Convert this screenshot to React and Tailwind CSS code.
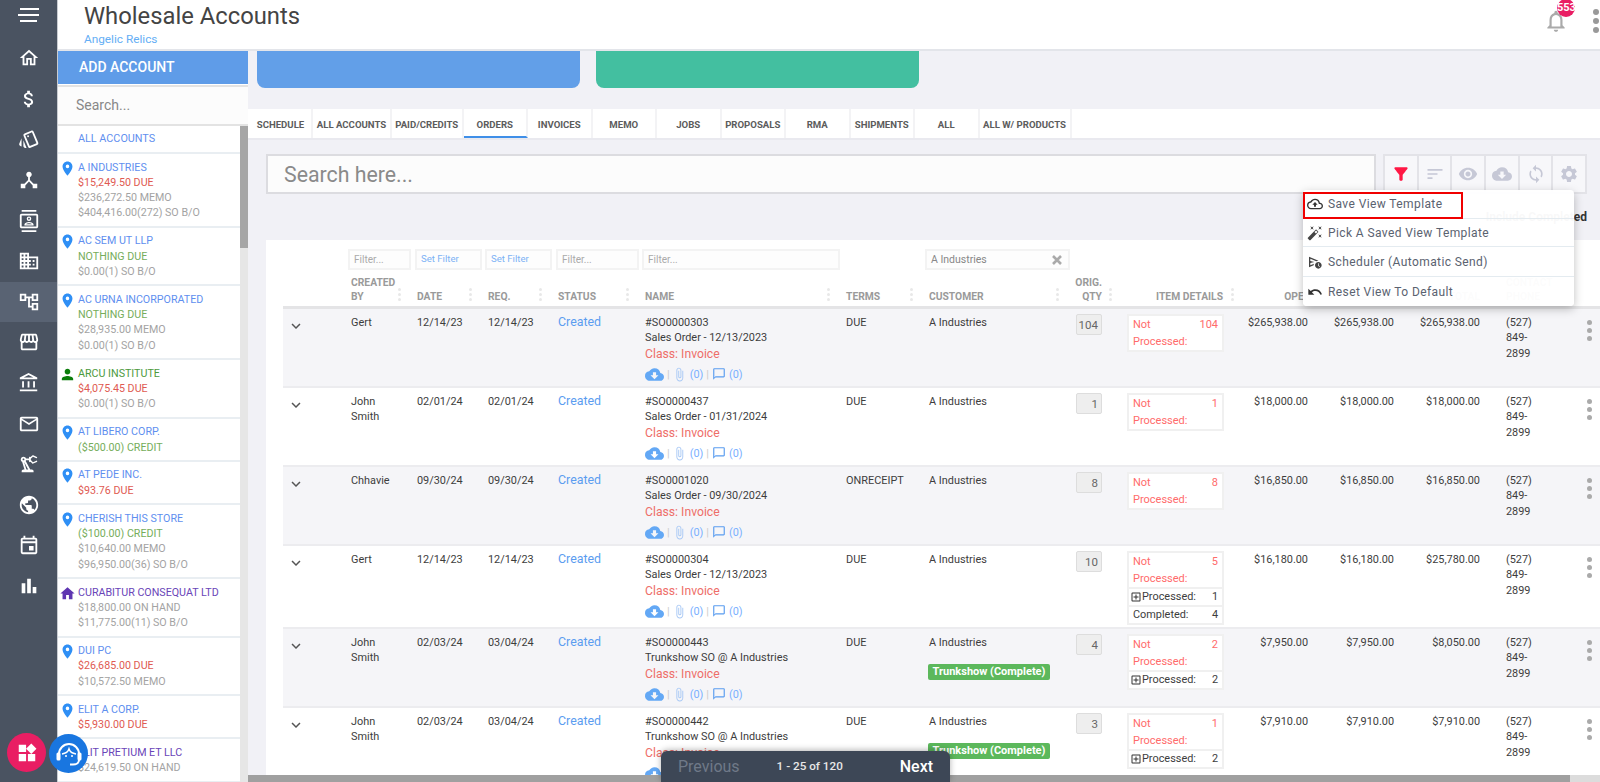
import {
  MdAttachFile, MdAttachMoney, MdAutoFixHigh, MdBarChart, MdChatBubbleOutline,
  MdCloudDownload, MdDeviceHub, MdFilterAlt, MdHome, MdKeyboardArrowDown, MdLocationOn, MdNotificationsNone,
  MdOutlineAccountBalance, MdOutlineAccountTree, MdOutlineAddBox, MdOutlineBusiness, MdOutlineCloudUpload,
  MdOutlineContacts, MdOutlineEvent, MdOutlineHome, MdOutlineMail, MdOutlinePrecisionManufacturing,
  MdOutlineScheduleSend, MdOutlineStorefront, MdOutlineStyle, MdPerson, MdPublic, MdSettings, MdSort, MdSync, MdUndo,
  MdVisibility, MdWidgets,
} from 'react-icons/md'

const navIcons = [
  MdOutlineHome, MdAttachMoney, MdOutlineStyle, MdDeviceHub, MdOutlineContacts, MdOutlineBusiness, MdOutlineAccountTree,
  MdOutlineStorefront, MdOutlineAccountBalance, MdOutlineMail, MdOutlinePrecisionManufacturing, MdPublic,
  MdOutlineEvent, MdBarChart,
]

const RED = 'text-[#e05a52]'
const GREEN = 'text-[#76ad5b]'
const GRAY = 'text-[#a3a3a3]'

const accounts = [
  { name: 'A INDUSTRIES', lines: [['$15,249.50 DUE', RED], ['$236,272.50 MEMO', GRAY], ['$404,416.00(272) SO B/O', GRAY]] },
  { name: 'AC SEM UT LLP', lines: [['NOTHING DUE', GREEN], ['$0.00(1) SO B/O', GRAY]] },
  { name: 'AC URNA INCORPORATED', lines: [['NOTHING DUE', GREEN], ['$28,935.00 MEMO', GRAY], ['$0.00(1) SO B/O', GRAY]] },
  { name: 'ARCU INSTITUTE', kind: 'person', lines: [['$4,075.45 DUE', RED], ['$0.00(1) SO B/O', GRAY]] },
  { name: 'AT LIBERO CORP.', lines: [['($500.00) CREDIT', GREEN]] },
  { name: 'AT PEDE INC.', lines: [['$93.76 DUE', RED]] },
  { name: 'CHERISH THIS STORE', lines: [['($100.00) CREDIT', GREEN], ['$10,640.00 MEMO', GRAY], ['$96,950.00(36) SO B/O', GRAY]] },
  { name: 'CURABITUR CONSEQUAT LTD', kind: 'house', lines: [['$18,800.00 ON HAND', GRAY], ['$11,775.00(11) SO B/O', GRAY]] },
  { name: 'DUI PC', lines: [['$26,685.00 DUE', RED], ['$10,572.50 MEMO', GRAY]] },
  { name: 'ELIT A CORP.', lines: [['$5,930.00 DUE', RED]] },
  { name: 'ELIT PRETIUM ET LLC', kind: 'house', lines: [['$24,619.50 ON HAND', GRAY]] },
]

const tabs = [
  ['SCHEDULE', 'w-[63px]'], ['ALL ACCOUNTS', 'w-[79px]'], ['PAID/CREDITS', 'w-[71.5px]'], ['ORDERS', 'w-[64.5px]'],
  ['INVOICES', 'w-[64.5px]'], ['MEMO', 'w-[64.5px]'], ['JOBS', 'w-[64.5px]'], ['PROPOSALS', 'w-[64.5px]'],
  ['RMA', 'w-[64.5px]'], ['SHIPMENTS', 'w-[64.5px]'], ['ALL', 'w-[64.5px]'], ['ALL W/ PRODUCTS', 'w-[92px]'],
]

const orders = [
  { by: 'Gert', date: '12/14/23', req: '12/14/23', so: '#SO0000303', title: 'Sales Order - 12/13/2023', terms: 'DUE', qty: 104, notProc: 104, open: '$265,938.00', bal: '$265,938.00', total: '$265,938.00' },
  { by: 'John Smith', date: '02/01/24', req: '02/01/24', so: '#SO0000437', title: 'Sales Order - 01/31/2024', terms: 'DUE', qty: 1, notProc: 1, open: '$18,000.00', bal: '$18,000.00', total: '$18,000.00' },
  { by: 'Chhavie', date: '09/30/24', req: '09/30/24', so: '#SO0001020', title: 'Sales Order - 09/30/2024', terms: 'ONRECEIPT', qty: 8, notProc: 8, open: '$16,850.00', bal: '$16,850.00', total: '$16,850.00' },
  { by: 'Gert', date: '12/14/23', req: '12/14/23', so: '#SO0000304', title: 'Sales Order - 12/13/2023', terms: 'DUE', qty: 10, notProc: 5, processed: 1, completed: 4, open: '$16,180.00', bal: '$16,180.00', total: '$25,780.00' },
  { by: 'John Smith', date: '02/03/24', req: '03/04/24', so: '#SO0000443', title: 'Trunkshow SO @ A Industries', terms: 'DUE', qty: 4, notProc: 2, processed: 2, badge: true, open: '$7,950.00', bal: '$7,950.00', total: '$8,050.00' },
  { by: 'John Smith', date: '02/03/24', req: '03/04/24', so: '#SO0000442', title: 'Trunkshow SO @ A Industries', terms: 'DUE', qty: 3, notProc: 1, processed: 2, badge: true, open: '$7,910.00', bal: '$7,910.00', total: '$7,910.00' },
]

const COLS = 'grid-cols-[68px_66px_71px_70px_87px_201px_83px_129px_44px_122px_84px_86px_86px_100px_20px]'

function AccountRow({ account }) {
  const Icon = account.kind === 'person' ? MdPerson : account.kind === 'house' ? MdHome : MdLocationOn
  const iconColor = account.kind === 'person' ? 'text-[#0b7d0b]' : account.kind === 'house' ? 'text-[#5e35b1]' : 'text-[#2f8ff5]'
  const nameColor = account.kind === 'person' ? 'text-[#4c9a3c]' : account.kind === 'house' ? 'text-[#6a45b8]' : 'text-[#5f8fef]'
  return (
    <div className="flex border-b-2 border-[#e9eef2] pt-[5.5px] pb-[5.15px] text-[10.7px] leading-[15.3px]">
      <div className="w-[20px] shrink-0 flex justify-center">
        <Icon className={`w-[17px] h-[17px] -ml-[2px] ${iconColor}`} />
      </div>
      <div>
        <div className={nameColor}>{account.name}</div>
        {account.lines.map(([text, color]) => (
          <div key={text} className={color}>{text}</div>
        ))}
      </div>
    </div>
  )
}

function HeadCell({ children, className = '', dots = 'right-[16px]' }) {
  return (
    <div className={`relative h-full flex items-end pb-[2px] ${className}`}>
      <span className="font-bold text-[10.3px] leading-[14px] text-[#9a9a9a]">{children}</span>
      {dots && (
        <span className={`absolute bottom-[5px] flex flex-col gap-[2px] ${dots}`}>
          <i className="w-[3px] h-[3px] rounded-full bg-[#e8e8e8]" />
          <i className="w-[3px] h-[3px] rounded-full bg-[#e8e8e8]" />
          <i className="w-[3px] h-[3px] rounded-full bg-[#e8e8e8]" />
        </span>
      )}
    </div>
  )
}

function Filter({ className, children, blue }) {
  return (
    <div className={`h-[21px] border-2 border-[#f3f3f3] bg-[#fdfdfd] flex items-center px-[4px] ${blue ? 'text-[9.6px] text-[#7cb2f5]' : 'text-[10px] text-[#aaa]'} ${className}`}>
      {children}
    </div>
  )
}

function OrderRow({ order, index }) {
  return (
    <div className={`grid ${COLS} border-b-2 border-[#ececef] min-h-[79px] text-[10.9px] leading-[15.4px] text-[#3d3d3d] ${index % 2 === 0 ? 'bg-[#f5f5f8]' : 'bg-white'}`}>
      <div className="pt-[8px] pl-[4px]"><MdKeyboardArrowDown className="w-[18px] h-[18px] text-[#555]" /></div>
      <div className="pt-[6px] pr-[20px]">{order.by}</div>
      <div className="pt-[6px]">{order.date}</div>
      <div className="pt-[6px]">{order.req}</div>
      <div className="pt-[5px] text-[12.4px] text-[#5b9df0]">Created</div>
      <div className="pt-[6px]">
        <div>{order.so}</div>
        <div>{order.title}</div>
        <div className="text-[12.2px] leading-[16.5px] text-[#ee6e69]">Class: Invoice</div>
        <div className="flex items-center h-[18px] mt-[3px] text-[#7ab0ff]">
          <MdCloudDownload className="w-[19px] h-[19px] text-[#63a8f5]" />
          <span className="ml-[3px] text-[#ccc] text-[11px]">|</span>
          <MdAttachFile className="w-[15px] h-[15px] ml-[2px] text-[#a9c9f5]" />
          <span className="ml-[3px]">(0)</span>
          <span className="ml-[3px] text-[#ccc] text-[11px]">|</span>
          <MdChatBubbleOutline className="w-[14px] h-[14px] ml-[3px] text-[#5b9df0]" />
          <span className="ml-[3px]">(0)</span>
        </div>
      </div>
      <div className="pt-[6px]">{order.terms}</div>
      <div className="pt-[6px]">
        <div>A Industries</div>
        {order.badge && (
          <div className="mt-[14px] -ml-[1px] w-[122px] h-[16px] rounded-[2px] bg-[#5cb85c] text-white font-bold text-[11px] leading-[16px] text-center whitespace-nowrap">
            Trunkshow (Complete)
          </div>
        )}
      </div>
      <div className="pt-[5px]">
        <div className="h-[21px] ml-[18px] border border-[#ddd] rounded-[2px] bg-[#eee] text-right pr-[3px] text-[11.5px] leading-[20px] text-[#666]">{order.qty}</div>
      </div>
      <div className="pt-[5px] pl-[25px] pb-[2px]">
        <div className="border-2 border-[#f0f0f0] bg-white">
          <div className="flex justify-between px-[4px] text-[11px] leading-[17px] text-[#ff6b6b]">
            <span className="w-[55px]">Not Processed:</span>
            <span>{order.notProc}</span>
          </div>
          {order.processed && (
            <div className="flex items-center justify-between h-[18px] pl-[1px] pr-[4px] border-t-2 border-[#f0f0f0]">
              <span className="flex items-center"><MdOutlineAddBox className="w-[12px] h-[12px] text-[#333]" />Processed:</span>
              <span>{order.processed}</span>
            </div>
          )}
          {order.completed && (
            <div className="flex items-center justify-between h-[18px] px-[4px] border-t-2 border-[#f0f0f0]">
              <span>Completed:</span>
              <span>{order.completed}</span>
            </div>
          )}
        </div>
      </div>
      <div className="pt-[6px] text-right">{order.open}</div>
      <div className="pt-[6px] text-right">{order.bal}</div>
      <div className="pt-[6px] text-right">{order.total}</div>
      <div className="pt-[6px] pl-[26px]"><div className="w-[32px]">(527) 849-2899</div></div>
      <div className="pt-[11px] flex flex-col gap-[3px] items-start pl-[7px]">
        <i className="w-[5px] h-[5px] rounded-full bg-[#aaa]" />
        <i className="w-[5px] h-[5px] rounded-full bg-[#aaa]" />
        <i className="w-[5px] h-[5px] rounded-full bg-[#aaa]" />
      </div>
    </div>
  )
}

export default function App() {
  return (
    <div className="relative flex h-screen w-full overflow-hidden bg-white font-['Roboto',sans-serif]">
      {/* left nav */}
      <div className="w-[58px] shrink-0 bg-[#4a5361] flex flex-col items-stretch border-r border-[#c9ccd1]">
        <div className="h-[38px] flex flex-col items-center justify-center gap-[4px] pb-[8px]">
          <i className="w-[19px] h-[2px] bg-white ml-[2px]" />
          <i className="w-[21px] h-[2px] bg-white" />
          <i className="w-[17px] h-[2px] bg-white" />
        </div>
        {navIcons.map((Icon, i) => (
          <div key={i} className={`h-[40.6px] flex items-center justify-center ${i === 6 ? 'bg-[#596373]' : ''}`}>
            <Icon className="w-[22px] h-[22px] text-white" />
          </div>
        ))}
      </div>

      <div className="flex-1 min-w-0 flex flex-col">
        {/* header */}
        <div className="h-[51px] shrink-0 flex justify-between border-b-2 border-[#e3e5ea] bg-white">
          <div className="pl-[26px]">
            <div className="pt-[1px] text-[23.8px] leading-[31px] text-[#444]">Wholesale Accounts</div>
            <div className="text-[11.8px] leading-[14px] text-[#64aef5]">Angelic Relics</div>
          </div>
          <div className="flex">
            <div className="relative w-[50px] pt-[8px]">
              <MdNotificationsNone className="w-[26px] h-[26px] text-[#aaa]" />
              <span className="absolute left-[14px] -top-[1px] w-[18px] h-[18px] rounded-full bg-[#e91e63] text-white text-[11px] font-bold leading-[18px] text-center">553</span>
            </div>
            <div className="w-[7px] pt-[9px] flex flex-col gap-[3px]">
              <i className="w-[6px] h-[6px] rounded-full bg-[#999]" />
              <i className="w-[6px] h-[6px] rounded-full bg-[#999]" />
              <i className="w-[6px] h-[6px] rounded-full bg-[#999]" />
            </div>
          </div>
        </div>

        <div className="flex-1 min-h-0 flex">
          {/* accounts panel */}
          <div className="w-[190px] shrink-0 flex flex-col bg-white">
            <div className="h-[33px] shrink-0 bg-[#5f9ce8] pl-[21px] text-white font-medium text-[14px] leading-[33px]">ADD ACCOUNT</div>
            <div className="h-[41px] shrink-0 mt-[1px] bg-[#fcfcfc] border-t-2 border-b-2 border-[#e3e3e3] pl-[18px] text-[14px] leading-[36px] text-[#888]">Search...</div>
            <div className="flex-1 min-h-0 flex">
              <div className="flex-1 min-w-0 overflow-hidden">
                <div className="h-[28px] border-b-2 border-[#e9eef2] pl-[20px] text-[10.8px] leading-[25px] text-[#5f8fef]">ALL ACCOUNTS</div>
                {accounts.map((a) => <AccountRow key={a.name} account={a} />)}
              </div>
              <div className="w-[8px] shrink-0 bg-[#e6e6e6]">
                <div className="h-[122px] bg-[#a6a6a6]" />
              </div>
            </div>
          </div>

          {/* main */}
          <div className="relative flex-1 min-w-0 flex flex-col bg-[#f1f1f6]">
            <div className="flex-1 min-h-0 flex flex-col overflow-hidden">
              <div className="h-[37px] shrink-0 flex gap-[16px] pl-[9px]">
                <div className="w-[323px] rounded-b-lg bg-[#629fe8]" />
                <div className="w-[323px] rounded-b-lg bg-[#43bfa0]" />
              </div>
              <div className="h-[31px] shrink-0 mt-[21px] flex pl-[2px] bg-white border-b-2 border-[#e9e9ef]">
                {tabs.map(([label, w]) => (
                  <div key={label} className={`${w} shrink-0 h-full border-r-2 border-[#f3f3f5] text-center text-[9.6px] font-bold leading-[32px] text-[#5c5c5c] whitespace-nowrap ${label === 'ORDERS' ? 'border-b-2 border-b-[#3f8fe8]' : ''}`}>
                    {label}
                  </div>
                ))}
              </div>
              <div className="shrink-0 flex pl-[18px] pt-[14px]">
                <div className="w-[1110px] h-[40px] border-2 border-[#dcdce0] bg-[#fcfcfc] pl-[16px] text-[21.3px] leading-[38px] text-[#8a8a8a]">Search here...</div>
                <div className="ml-[7px] w-[204px] h-[40px] flex border-2 border-[#e3e3e8] bg-[#f7f7fa]">
                  {[MdFilterAlt, MdSort, MdVisibility, MdCloudDownload, MdSync, MdSettings].map((Icon, i) => (
                    <div key={i} className="flex-1 flex items-center justify-center border-r-2 border-[#e3e3e8] last:border-r-0">
                      <Icon className={`w-[20px] h-[20px] ${i === 0 ? 'text-[#ff1744]' : 'text-[#c6c8d6]'}`} />
                    </div>
                  ))}
                </div>
              </div>
              <div className="h-[46px] shrink-0 flex justify-end items-center pr-[13px] pb-[1px] text-[12px] font-bold text-[#333]">Include Completed</div>

              {/* orders table */}
              <div className="flex-1 min-h-0 ml-[18px] pl-[17px] bg-white">
                <div className="flex pt-[9px] pl-[65px]">
                  <Filter className="w-[63px]">Filter...</Filter>
                  <Filter blue className="w-[67px] ml-[4px]">Set Filter</Filter>
                  <Filter blue className="w-[67px] ml-[3px]">Set Filter</Filter>
                  <Filter className="w-[83px] ml-[4px]">Filter...</Filter>
                  <Filter className="w-[198px] ml-[3px]">Filter...</Filter>
                  <Filter className="w-[145px] ml-[85px] justify-between !text-[#888] !text-[10.5px]">
                    A Industries
                    <svg viewBox="0 0 10 10" className="w-[10px] h-[10px] mr-[2px]">
                      <path d="M1 1l8 8M9 1l-8 8" stroke="#aaa" strokeWidth="2.6" />
                    </svg>
                  </Filter>
                </div>
                <div className={`grid ${COLS} h-[39px] border-b-[3px] border-[#e4e4e6]`}>
                  <div />
                  <HeadCell><span className="block w-[40px]">CREATED BY</span></HeadCell>
                  <HeadCell>DATE</HeadCell>
                  <HeadCell>REQ.</HeadCell>
                  <HeadCell>STATUS</HeadCell>
                  <HeadCell>NAME</HeadCell>
                  <HeadCell>TERMS</HeadCell>
                  <HeadCell dots="-right-[1px]">CUSTOMER</HeadCell>
                  <HeadCell className="justify-end text-right" dots="-right-[10px]"><span className="block w-[30px]">ORIG. QTY</span></HeadCell>
                  <HeadCell className="justify-end pr-[1px]" dots="-right-[10px]">ITEM DETAILS</HeadCell>
                  <HeadCell className="justify-end -mr-[3px]" dots={null}>OPEN</HeadCell>
                  <HeadCell className="justify-end" dots={null}>BALANCE</HeadCell>
                  <HeadCell className="justify-end" dots={null}>TOTAL</HeadCell>
                  <HeadCell className="pl-[26px]" dots={null}><span className="block w-[50px]">CONTACT PHONE</span></HeadCell>
                  <div />
                </div>
                {orders.map((o, i) => <OrderRow key={o.so} order={o} index={i} />)}
              </div>
            </div>
            <div className="h-[7px] shrink-0 bg-[#dcdcdc]">
              <div className="w-[1322px] h-full bg-[#a0a0a0]" />
            </div>

            {/* pagination */}
            <div className="absolute left-[413px] bottom-0 w-[289px] h-[31px] rounded-t-md bg-[#3d4756] shadow-[0_-1px_6px_rgba(0,0,0,0.3)] flex items-center pl-[17px] pr-[17px]">
              <span className="text-[16px] text-[#6f7988]">Previous</span>
              <span className="ml-[37px] text-[11.7px] font-medium text-[#e8e8e8]">1 - 25 of 120</span>
              <span className="ml-auto text-[16px] font-medium text-white">Next</span>
            </div>
          </div>
        </div>
      </div>

      {/* view menu */}
      <div className="absolute left-[1303px] top-[190px] w-[271px] h-[116px] rounded-[4px] bg-white/[0.97] shadow-[0_3px_10px_rgba(0,0,0,0.25)] text-[12px] tracking-[0.4px] text-[#5a6270]">
        <div className="h-[29px] flex items-center pl-[4px] pb-[1px] border-b border-[#e4ebf0]">
          <div className="absolute left-0 top-[2px] w-[160px] h-[27px] border-2 border-[#f00000]" />
          <MdOutlineCloudUpload className="w-[16px] h-[16px] text-[#333]" /><span className="ml-[5px]">Save View Template</span>
        </div>
        <div className="h-[28px] flex items-center pl-[4px] border-b border-[#e4ebf0]">
          <MdAutoFixHigh className="w-[16px] h-[16px] text-[#444]" /><span className="ml-[5px]">Pick A Saved View Template</span>
        </div>
        <div className="h-[30px] flex items-center pl-[4px] border-b border-[#e4ebf0]">
          <MdOutlineScheduleSend className="w-[16px] h-[16px] text-[#444]" /><span className="ml-[5px]">Scheduler (Automatic Send)</span>
        </div>
        <div className="h-[29px] flex items-center pl-[4px]">
          <MdUndo className="w-[16px] h-[16px] text-[#333]" /><span className="ml-[5px]">Reset View To Default</span>
        </div>
      </div>

      {/* floating buttons */}
      <div className="absolute left-[7px] top-[733px] w-[39px] h-[39px] rounded-full bg-[#e91e63] flex items-center justify-center">
        <MdWidgets className="w-[22px] h-[22px] text-white" />
      </div>
      <div className="absolute left-[49px] top-[734px] w-[39px] h-[39px] rounded-full bg-[#1976e0] flex items-center justify-center">
        <svg viewBox="0 0 30 30" className="w-[30px] h-[30px]" fill="none">
          <path d="M5 15a10 10 0 0 1 20 0" stroke="#fff" strokeWidth="2" />
          <path d="M8 15c3-0.5 6-2 7-5 1 3 4 4.500 7 5" stroke="#fff" strokeWidth="1.6" />
          <rect x="2.500" y="13.500" width="4" height="8" rx="1.500" fill="#fff" />
          <rect x="23.500" y="13.500" width="4" height="8" rx="1.500" fill="#fff" />
          <path d="M25 21c0 3-3 4.500-6 4.500h-3" stroke="#fff" strokeWidth="2" />
          <circle cx="12" cy="17" r="1" fill="#fff" />
          <circle cx="18" cy="17" r="1" fill="#fff" />
        </svg>
      </div>
    </div>
  )
}
